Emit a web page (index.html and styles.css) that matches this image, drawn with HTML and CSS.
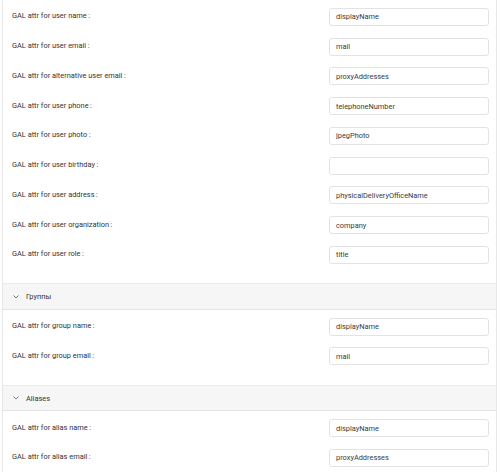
FILE: index.html
```html
<!DOCTYPE html>
<html lang="ru">
<head>
  <meta charset="UTF-8" />
  <title>GAL</title>
  <link rel="stylesheet" href="styles.css">
</head>
<body>
  <div class="panel">
    <div class="section">
      <div class="row"><label>GAL attr for user name</label><input value="displayName"></div>
      <div class="row"><label>GAL attr for user email</label><input value="mail"></div>
      <div class="row"><label>GAL attr for alternative user email</label><input value="proxyAddresses"></div>
      <div class="row"><label>GAL attr for user phone</label><input value="telephoneNumber"></div>
      <div class="row"><label>GAL attr for user photo</label><input value="jpegPhoto"></div>
      <div class="row"><label>GAL attr for user birthday</label><input value=""></div>
      <div class="row"><label>GAL attr for user address</label><input value="physicalDeliveryOfficeName"></div>
      <div class="row"><label>GAL attr for user organization</label><input value="company"></div>
      <div class="row"><label>GAL attr for user role</label><input value="title"></div>
    </div>

    <div class="group-head">
      <svg class="chevron" width="6" height="4" viewBox="0 0 6 4"><path d="M0.5 0.5 L3 3 L5.5 0.5" /></svg>
      <span>Группы</span>
    </div>
    <div class="section">
      <div class="row"><label>GAL attr for group name</label><input value="displayName"></div>
      <div class="row"><label>GAL attr for group email</label><input value="mail"></div>
    </div>

    <div class="group-head">
      <svg class="chevron" width="6" height="4" viewBox="0 0 6 4"><path d="M0.5 0.5 L3 3 L5.5 0.5" /></svg>
      <span>Aliases</span>
    </div>
    <div class="section">
      <div class="row"><label>GAL attr for alias name</label><input value="displayName"></div>
      <div class="row"><label>GAL attr for alias email</label><input value="proxyAddresses"></div>
    </div>
  </div>
</body>
</html>
```

FILE: styles.css
```css
* { box-sizing: border-box; }
body {
  margin: 0; background: #fff; color: #333;
  font-family: Roboto, "Liberation Sans", sans-serif; font-size: 7.4px;
}
.panel {
  margin: 0 3px 0 2px; min-height: 472px;
  border-left: 1px solid #e6e6e6; border-right: 1px solid #e6e6e6;
}
.section { padding: 1px 0 14.5px; }
.row {
  height: 29.75px; display: flex; align-items: center;
  justify-content: space-between; padding: 0 7px 0 9px;
}
.row label::after { content: ":"; margin-left: 1.5px; }
.row input {
  width: 160px; height: 18px; margin-top: 2px;
  border: 1px solid #e3e3e3; border-radius: 3px;
  padding: 0 6px; font: inherit; color: #3a3a3a; outline: none;
}
.group-head {
  height: 26.5px; display: flex; align-items: center; gap: 7px;
  padding-left: 10px; background: #f6f6f6;
  border-top: 1px solid #ebebeb; border-bottom: 1px solid #e3e3e3;
}
.chevron { fill: none; stroke: #777; stroke-width: 1; }
```
